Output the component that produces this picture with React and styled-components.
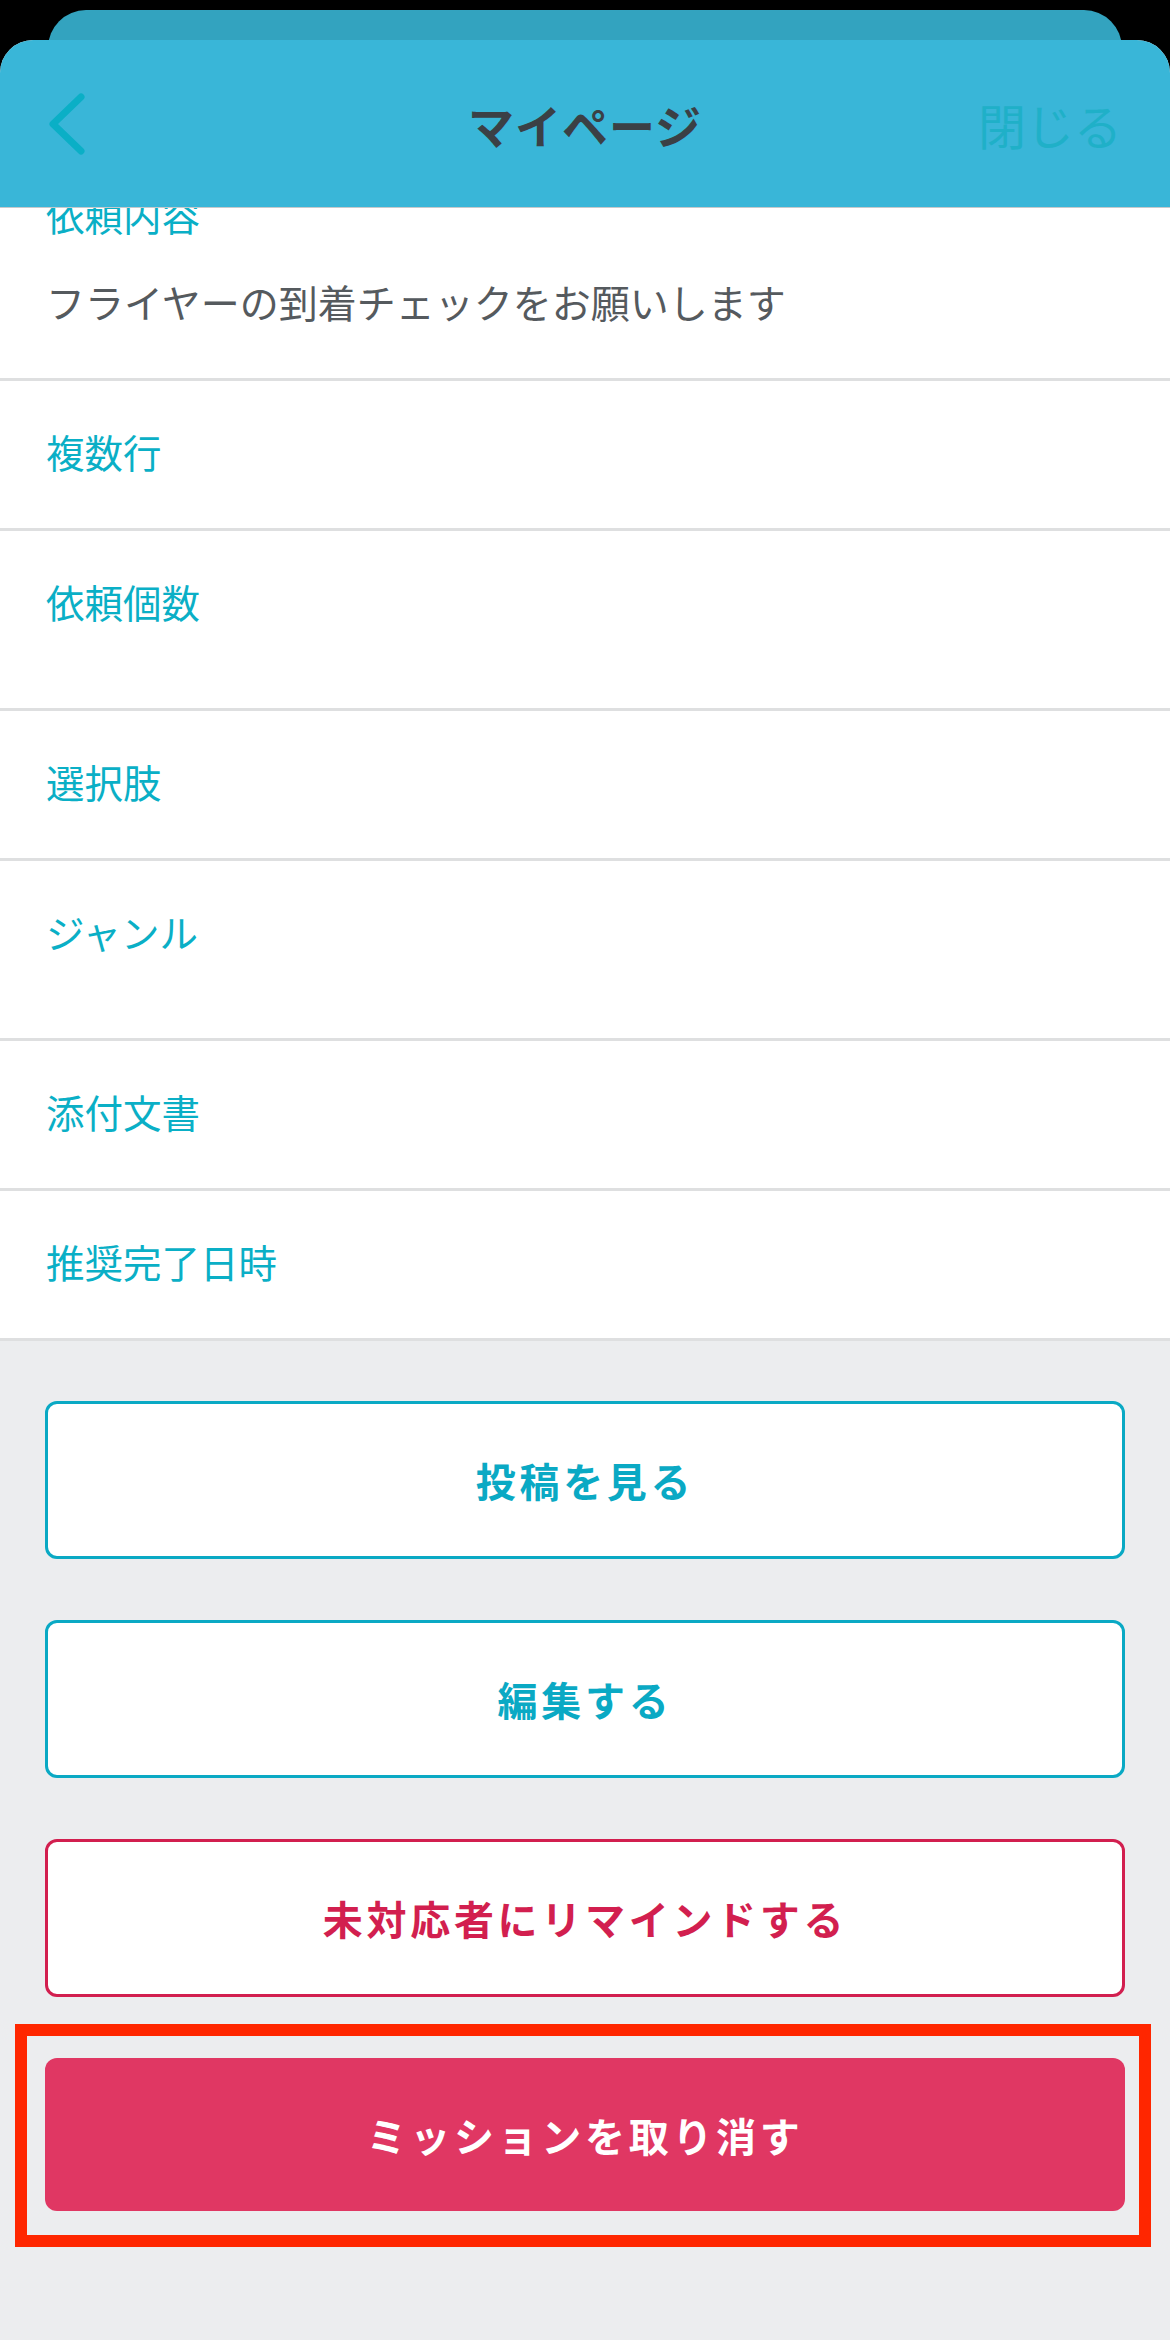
import React from "react";
import styled, { createGlobalStyle } from "styled-components";

const GlobalStyle = createGlobalStyle`
  body {
    margin: 0;
    background: #000;
    font-family: "Noto Sans CJK JP", "Noto Sans", sans-serif;
  }
`;

const Screen = styled.div`
  width: 1170px;
  min-height: 2340px;
  background: #000;
  overflow: hidden;
`;

// the page underneath the modal sheet
const BackSheet = styled.div`
  margin: 10px 48px -30px;
  height: 60px;
  background: #33a3bf;
  border-radius: 38px 38px 0 0;
`;

const Sheet = styled.div`
  position: relative;
  z-index: 1;
  min-height: 2300px;
  background: #ecedef;
  border-radius: 33px 33px 0 0;
  overflow: hidden;
`;

const NavBar = styled.header`
  position: absolute;
  top: 0;
  left: 0;
  right: 0;
  z-index: 2;
  height: 167px;
  display: grid;
  grid-template-columns: 1fr auto 1fr;
  align-items: center;
  padding: 0 48px 0 48px;
  background: #39b6d8;
  border-bottom: 1px solid #c6c9cb;
`;

const BackButton = styled.button`
  justify-self: start;
  display: flex;
  padding: 0;
  border: none;
  background: none;
`;

const NavTitle = styled.h1`
  margin: 0;
  font-size: 46px;
  font-weight: 700;
  letter-spacing: 1px;
  color: #3b4045;
`;

const CloseLink = styled.span`
  justify-self: end;
  font-size: 48px;
  color: #1fb0c8;
`;

const Content = styled.main`
  padding-top: 104px;
`;

const List = styled.div`
  background: #fff;
`;

const Row = styled.div`
  padding: 46px 46px 53px;
  border-bottom: 3px solid #dedfe0;
`;

const Label = styled.div`
  font-size: 38.5px;
  line-height: 48px;
  color: #0aafc6;
`;

const Value = styled.div`
  margin-top: ${(p) => (p.$empty ? "0" : "39px")};
  height: ${(p) => (p.$empty ? "30px" : "auto")};
  font-size: 39px;
  line-height: 48px;
  color: #555a5e;
`;

const Actions = styled.div`
  display: flex;
  flex-direction: column;
  gap: 61px;
  padding: 60px 45px;
`;

const tones = {
  teal: { border: "#0aa9c4", text: "#0aa9c4", bg: "#fff" },
  rose: { border: "#d21f4f", text: "#d21f4f", bg: "#fff" },
  danger: { border: "#e03763", text: "#fff", bg: "#e03763" },
};

const ActionButton = styled.button`
  width: 100%;
  height: ${(p) => (p.$tone === "danger" ? "153px" : "158px")};
  border: ${(p) => (p.$tone === "danger" ? "none" : `3px solid ${tones[p.$tone].border}`)};
  border-radius: 12px;
  background: ${(p) => tones[p.$tone].bg};
  color: ${(p) => tones[p.$tone].text};
  font-family: inherit;
  font-size: 40px;
  font-weight: 700;
  letter-spacing: 3.7px;
`;

// red annotation box drawn around the cancel button
const Highlight = styled.div`
  position: relative;
  &::after {
    content: "";
    position: absolute;
    top: -34px;
    bottom: -36px;
    left: -30px;
    right: -26px;
    border: 12px solid #ff2600;
    pointer-events: none;
  }
`;

const rows = [
  { label: "依頼内容", value: "フライヤーの到着チェックをお願いします" },
  { label: "複数行" },
  { label: "依頼個数", empty: true },
  { label: "選択肢" },
  { label: "ジャンル", empty: true },
  { label: "添付文書" },
  { label: "推奨完了日時" },
];

export default function App() {
  return (
    <Screen>
      <GlobalStyle />
      <BackSheet />
      <Sheet>
        <NavBar>
          <BackButton aria-label="戻る">
            <svg width="40" height="64" viewBox="0 0 40 64">
              <path d="M33 5 L5 32 L33 59" fill="none" stroke="#0aafc6" strokeWidth="7" strokeLinecap="round" strokeLinejoin="round" />
            </svg>
          </BackButton>
          <NavTitle>マイページ</NavTitle>
          <CloseLink>閉じる</CloseLink>
        </NavBar>
        <Content>
          <List>
            {rows.map((r) => (
              <Row key={r.label}>
                <Label>{r.label}</Label>
                {r.value && <Value>{r.value}</Value>}
                {r.empty && <Value $empty />}
              </Row>
            ))}
          </List>
          <Actions>
            <ActionButton $tone="teal">投稿を見る</ActionButton>
            <ActionButton $tone="teal">編集する</ActionButton>
            <ActionButton $tone="rose">未対応者にリマインドする</ActionButton>
            <Highlight>
              <ActionButton $tone="danger">ミッションを取り消す</ActionButton>
            </Highlight>
          </Actions>
        </Content>
      </Sheet>
    </Screen>
  );
}
